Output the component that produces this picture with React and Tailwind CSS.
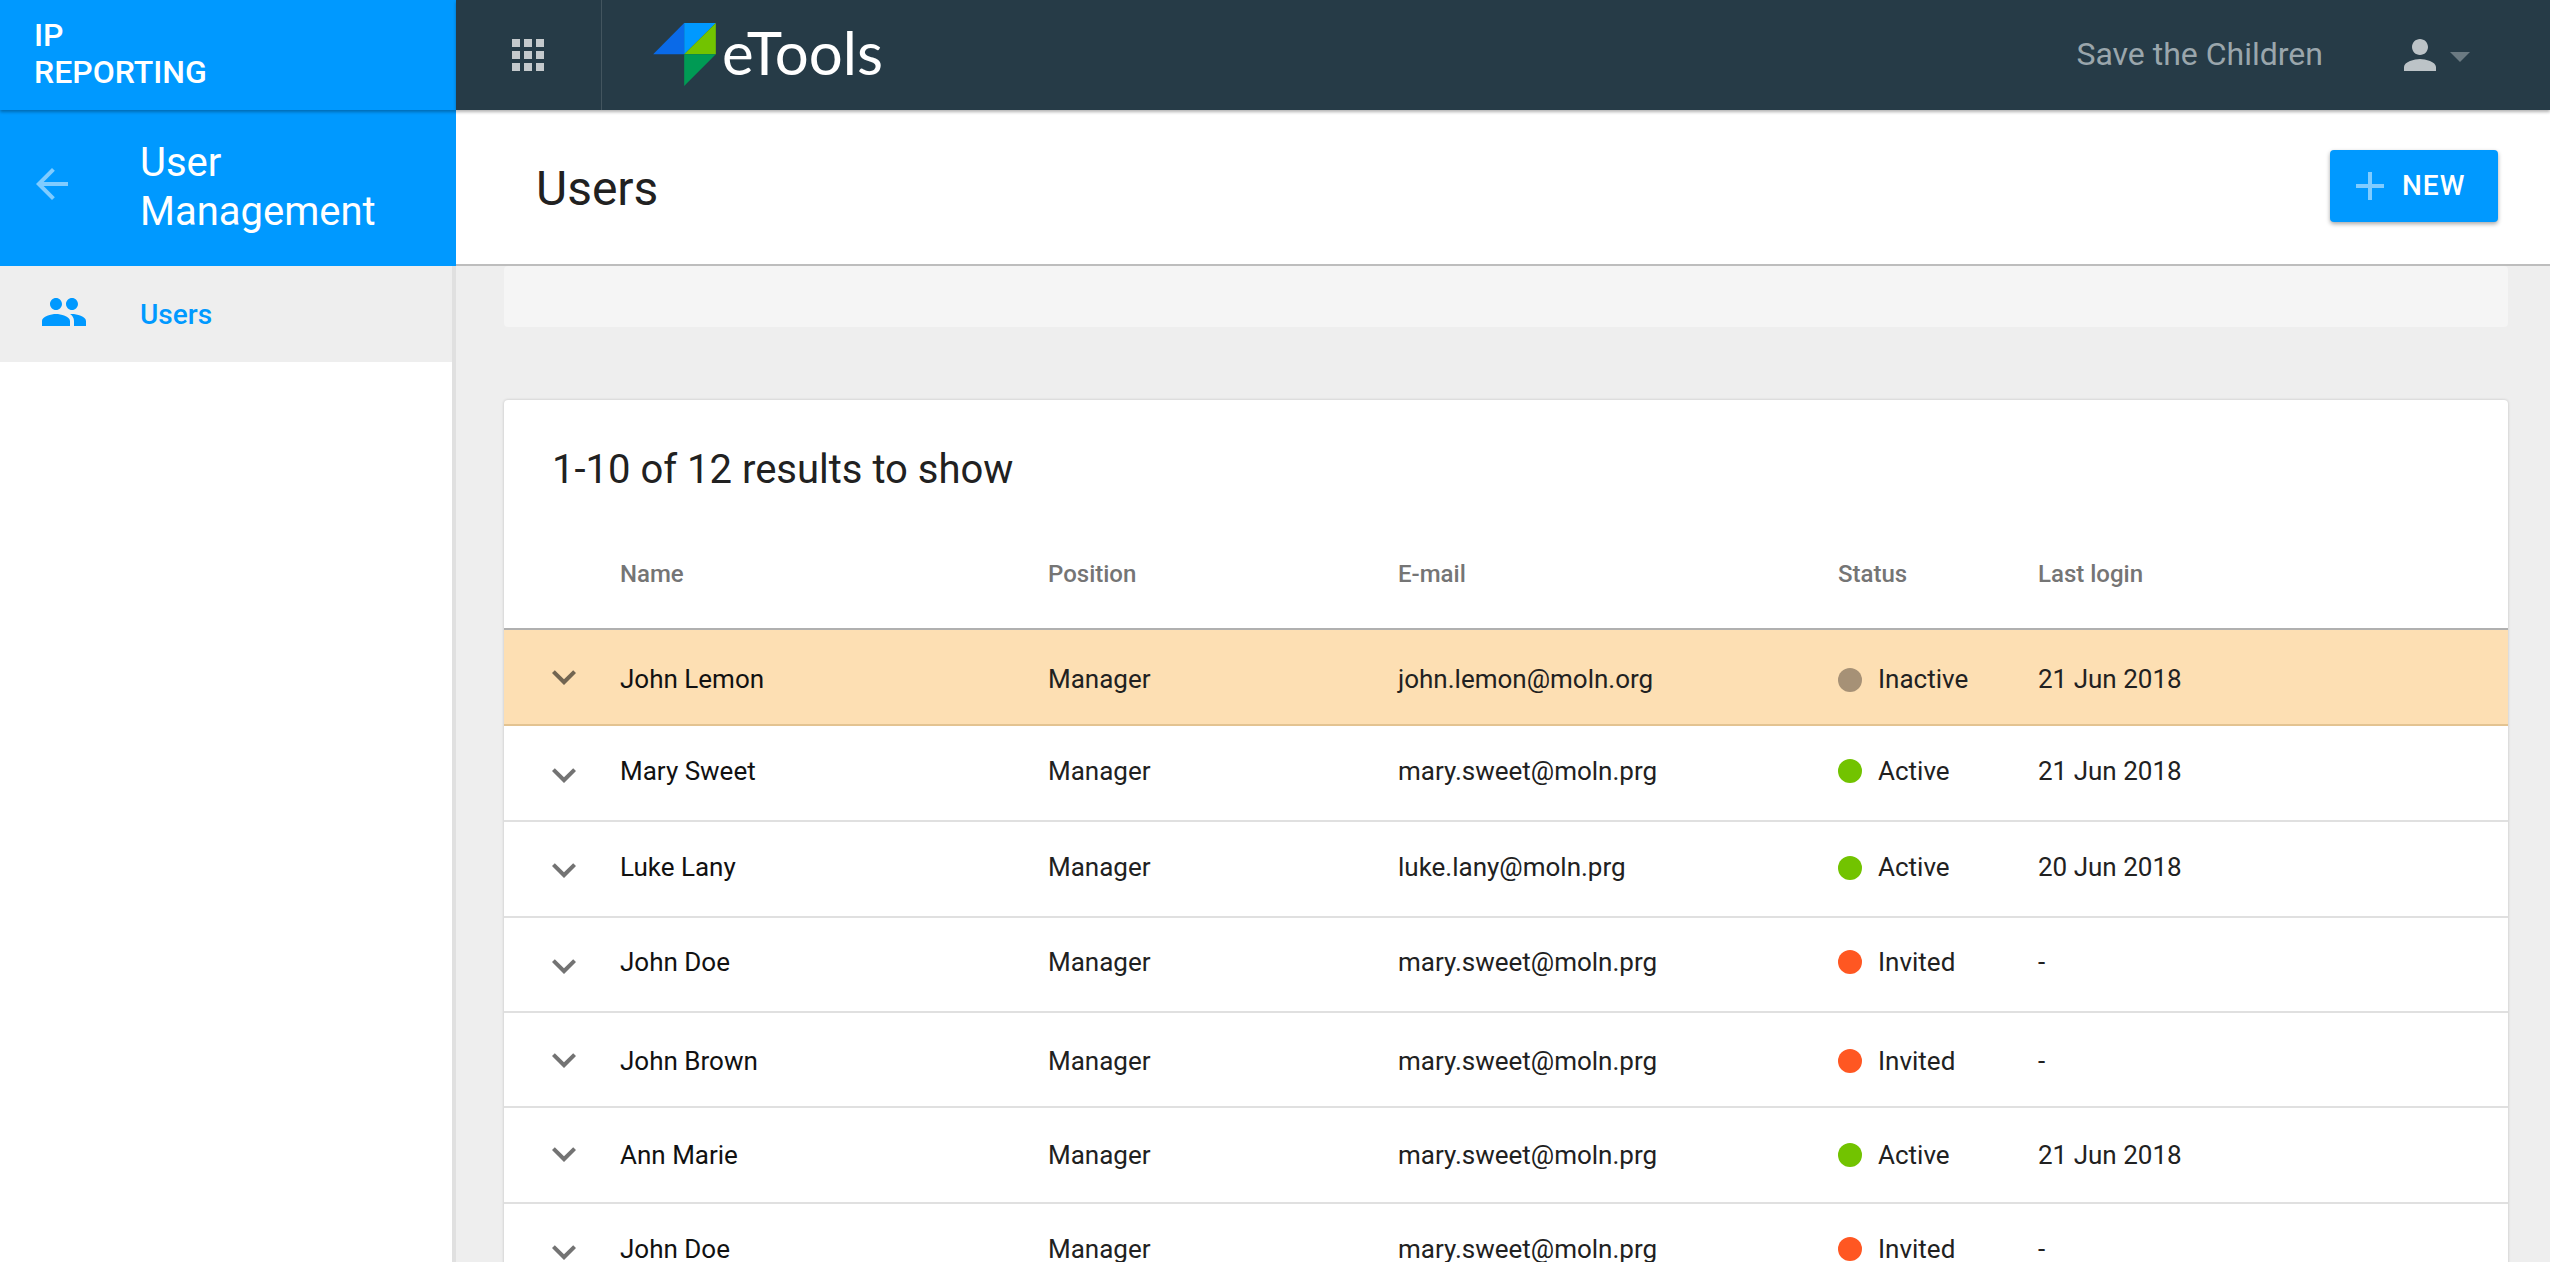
import React from 'react'

const users = [
  { name: 'John Lemon', email: 'john.lemon@moln.org', status: 'Inactive', login: '21 Jun 2018', row: 'h-[96px] bg-[#fddfb3] border-[#e3c391]', text: 'pt-[5px]', chevron: 'pt-[0px]' },
  { name: 'Mary Sweet', email: 'mary.sweet@moln.prg', status: 'Active', login: '21 Jun 2018', row: 'h-[96px] border-[#e0e0e0]', text: 'pb-[4px]', chevron: 'pt-[4px]' },
  { name: 'Luke Lany', email: 'luke.lany@moln.prg', status: 'Active', login: '20 Jun 2018', row: 'h-[96px] border-[#e0e0e0]', text: 'pb-[3px]', chevron: 'pt-[2px]' },
  { name: 'John Doe', email: 'mary.sweet@moln.prg', status: 'Invited', login: '-', row: 'h-[95px] border-[#e0e0e0]', text: 'pb-[5px]', chevron: 'pt-[2px]' },
  { name: 'John Brown', email: 'mary.sweet@moln.prg', status: 'Invited', login: '-', row: 'h-[95px] border-[#e0e0e0]', text: 'pt-[3px]', chevron: 'pt-[0px]' },
  { name: 'Ann Marie', email: 'mary.sweet@moln.prg', status: 'Active', login: '21 Jun 2018', row: 'h-[96px] border-[#e0e0e0]', text: 'pb-[0px]', chevron: 'pb-[2px]' },
  { name: 'John Doe', email: 'mary.sweet@moln.prg', status: 'Invited', login: '-', row: 'h-[96px] border-[#e0e0e0]', text: 'pb-[4px]', chevron: 'pt-[2px]' },
]

const dotColor = {
  Inactive: 'bg-[#a69176]',
  Active: 'bg-[#72c300]',
  Invited: 'bg-[#ff5722]',
}

const columns = 'grid grid-cols-[80px_428px_350px_440px_200px_1fr] items-center pl-9'

const Icon = ({ d, className }) => (
  <svg viewBox="0 0 24 24" className={className} fill="currentColor">
    <path d={d} />
  </svg>
)

const Logo = () => (
  <svg viewBox="100 66 188 189" className="w-[63px] h-[63px]">
    <polygon points="193,66 193,160 100,160" fill="#0a6ae8" />
    <polygon points="193,66 288,66 193,160" fill="#0099ff" />
    <polygon points="288,66 288,160 193,160" fill="#72c300" />
    <polygon points="193,160 288,160 193,255" fill="#009a54" />
  </svg>
)

const UserRow = ({ user }) => (
  <div className={`${columns} border-b-2 text-[26px] text-[#212121] ${user.row}`}>
    <div className={`flex items-center ${user.chevron}`}>
      <Icon d="M16.59 8.59L12 13.17 7.41 8.59 6 10l6 6 6-6z" className="w-12 h-12 text-black/55" />
    </div>
    <div className={`text-[#111111] ${user.text}`}>{user.name}</div>
    <div className={user.text}>Manager</div>
    <div className={user.text}>{user.email}</div>
    <div className={`flex items-center ${user.text}`}>
      <span className={`w-6 h-6 rounded-full mr-4 ${dotColor[user.status]}`}></span>
      <span>{user.status}</span>
    </div>
    <div className={user.text}>{user.login}</div>
  </div>
)

export default function App() {
  return (
    <div className="flex h-screen overflow-hidden bg-[#eeeeee] font-[Roboto,sans-serif]">
      {/* Sidebar */}
      <aside className="w-[456px] shrink-0 flex flex-col bg-white border-r-4 border-[#e0e0e0] box-border">
        <div className="w-[456px] h-[110px] shrink-0 bg-[#0099ff] text-white text-[32px] leading-[37px] font-medium pl-[34px] pt-[17px] shadow-[0_2px_3px_rgba(0,0,0,0.3)] z-10">
          <div>IP</div>
          <div>REPORTING</div>
        </div>
        <div className="w-[456px] h-[156px] shrink-0 bg-[#0099ff] flex items-center text-white">
          <Icon d="M20 11H7.83l5.59-5.59L12 4l-8 8 8 8 1.41-1.41L7.83 13H20v-2z" className="w-12 h-12 ml-7 mb-2 text-[#80ccff]" />
          <div className="ml-[64px] mb-[2px] text-[40px] leading-[49px]">
            User
            <br />
            Management
          </div>
        </div>
        <div className="h-[96px] shrink-0 flex items-center bg-[#eeeeee] text-[#0099ff]">
          <Icon d="M16 11c1.66 0 2.99-1.34 2.99-3S17.66 5 16 5c-1.66 0-3 1.34-3 3s1.34 3 3 3zm-8 0c1.66 0 2.99-1.34 2.99-3S9.66 5 8 5C6.34 5 5 6.34 5 8s1.34 3 3 3zm0 2c-2.33 0-7 1.17-7 3.5V19h14v-2.5c0-2.33-4.67-3.5-7-3.5zm8 0c-.29 0-.62.02-.97.05 1.16.84 1.97 1.97 1.97 3.45V19h6v-2.5c0-2.33-4.67-3.5-7-3.5z" className="w-12 h-12 ml-10 mb-1" />
          <span className="ml-[52px] mt-[2px] text-[28px] font-medium">Users</span>
        </div>
      </aside>

      <div className="flex-1 min-w-0 flex flex-col">
        {/* Top bar */}
        <header className="h-[110px] shrink-0 bg-[#263b47] flex items-center shadow-[0_2px_3px_rgba(0,0,0,0.3)] z-10">
          <div className="w-[146px] h-full flex items-center border-r border-[#43555f]">
            <Icon d="M4 8h4V4H4v4zm6 12h4v-4h-4v4zm-6 0h4v-4H4v4zm0-6h4v-4H4v4zm6 0h4v-4h-4v4zm6-10v4h4V4h-4zm-6 4h4V4h-4v4zm6 6h4v-4h-4v4zm0 6h4v-4h-4v4z" className="w-12 h-12 ml-12 text-[#c4c9cc]" />
          </div>
          <div className="ml-[51px] mb-[2px]">
            <Logo />
          </div>
          <div className="ml-[6px] text-white text-[60px] leading-none font-[Lato,sans-serif] font-normal mb-[6px]">eTools</div>
          <div className="ml-auto text-[32px] text-[#9aa6ac] mb-[2px]">Save the Children</div>
          <Icon d="M12 12c2.21 0 4-1.79 4-4s-1.79-4-4-4-4 1.79-4 4 1.79 4 4 4zm0 2c-2.67 0-8 1.34-8 4v2h16v-2c0-2.66-5.33-4-8-4z" className="w-12 h-12 ml-[73px] text-[#bcc3c7]" />
          <div className="ml-[6px] mr-[80px] mt-[4px] w-0 h-0 border-x-[10px] border-x-transparent border-t-[10px] border-t-[#6b7a82]"></div>
        </header>

        {/* Page header */}
        <div className="h-[156px] shrink-0 bg-white border-b-2 border-[#bdbdbd] flex items-center justify-between pl-[80px] pr-[52px]">
          <h1 className="text-[48px] text-[#212121] mt-[4px]">Users</h1>
          <button className="w-[168px] h-[72px] mb-[2px] flex items-center bg-[#0099ff] text-white text-[28px] font-medium tracking-[1px] rounded-[4px] shadow-[0_2px_4px_rgba(0,0,0,0.35)]">
            <Icon d="M19 13h-6v6h-2v-6H5v-2h6V5h2v6h6v2z" className="w-12 h-12 ml-[16px] text-[#80ccff]" />
            <span className="ml-[8px]">NEW</span>
          </button>
        </div>

        {/* Content */}
        <main className="flex-1 min-h-0 pl-12 pr-[42px]">
          <div className="h-[61px] bg-[#f5f5f5] rounded-[4px]"></div>
          <section className="mt-[73px] bg-white rounded-t-[4px] shadow-[0_0_3px_rgba(0,0,0,0.2)]">
            <div className="h-[136px] flex items-center pl-12 pt-[3px] text-[40px] text-[#212121]">1-10 of 12 results to show</div>
            <div className={`${columns} h-[94px] pb-4 border-b-2 border-[#b0b0b0] text-[24px] font-medium text-[#757575]`}>
              <div></div>
              <div>Name</div>
              <div>Position</div>
              <div>E-mail</div>
              <div>Status</div>
              <div>Last login</div>
            </div>
            {users.map((user, idx) => (
              <UserRow key={idx} user={user} />
            ))}
          </section>
        </main>
      </div>
    </div>
  )
}
